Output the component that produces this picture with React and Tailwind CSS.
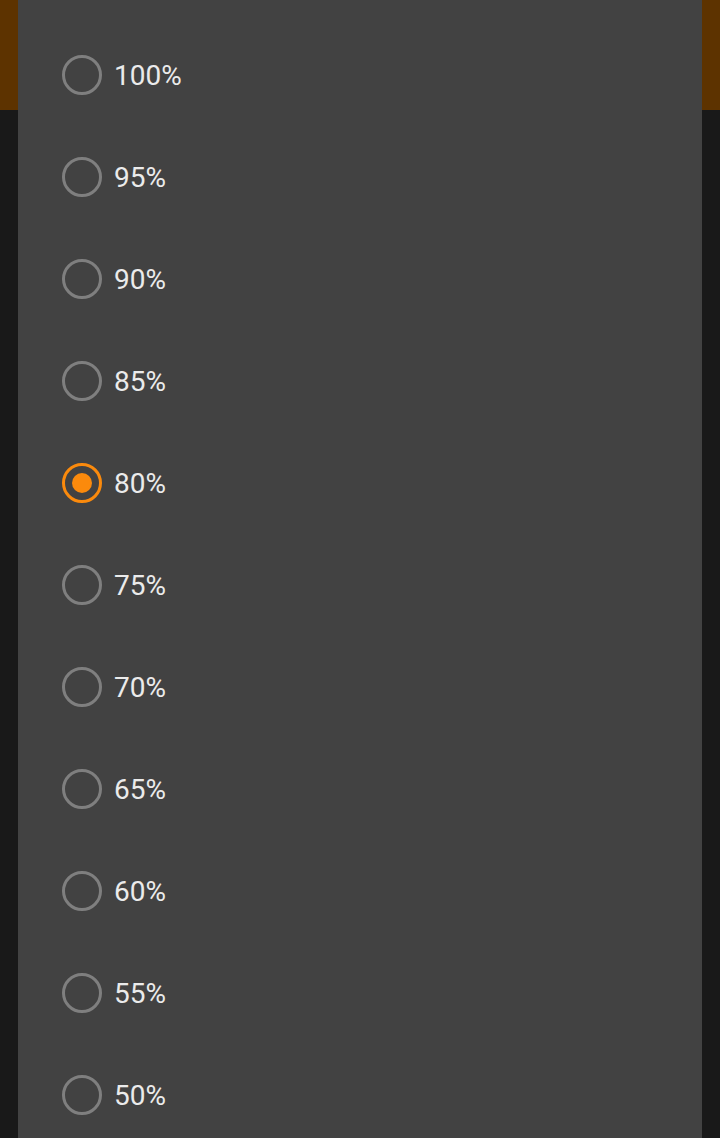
import React, { useState } from 'react'

const options = ['100%', '95%', '90%', '85%', '80%', '75%', '70%', '65%', '60%', '55%', '50%']

function Radio({ checked }) {
    return (
        <span
            className={`flex items-center justify-center w-10 h-10 rounded-full border-[3.5px] shrink-0 ${checked ? 'border-[#fb8a0c]' : 'border-[#7f7f7f]'
                }`}
        >
            {checked && <span className="w-5 h-5 rounded-full bg-[#fb8a0c]" />}
        </span>
    )
}

export default function App() {
    const [value, setValue] = useState('80%')

    return (
        <div className="relative w-[720px] h-[1138px] overflow-hidden bg-[#191919] font-['Roboto',sans-serif]">
            {/* dimmed app bar behind the dialog */}
            <div className="h-[110px] bg-[#5d3300]" />

            {/* Dialog */}
            <div className="absolute top-0 bottom-0 left-[18px] right-[18px] bg-[#424242]">
                <div className="flex flex-col pt-[24px]">
                    {options.map((opt) => (
                        <button
                            key={opt}
                            onClick={() => setValue(opt)}
                            className="flex items-center h-[102px] pl-[44px] gap-[12px] text-left"
                        >
                            <Radio checked={value === opt} />
                            <span className="mt-[2px] text-[28px] text-[#ebebeb] leading-none">{opt}</span>
                        </button>
                    ))}
                </div>
            </div>
        </div>
    )
}
